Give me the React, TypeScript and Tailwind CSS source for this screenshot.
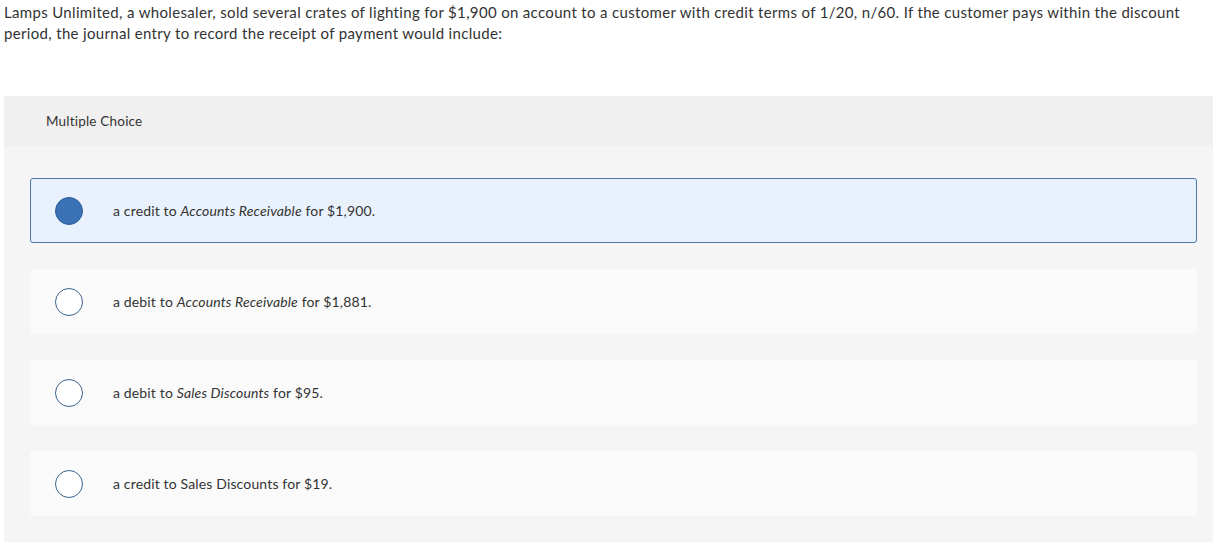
import React from 'react'

type Choice = {
  pre: string
  em?: string
  post: string
}

const choices: Choice[] = [
  { pre: 'a credit to ', em: 'Accounts Receivable', post: ' for $1,900.' },
  { pre: 'a debit to ', em: 'Accounts Receivable', post: ' for $1,881.' },
  { pre: 'a debit to ', em: 'Sales Discounts', post: ' for $95.' },
  { pre: 'a credit to Sales Discounts for $19.', post: '' },
]

function Radio({ checked }: { checked: boolean }) {
  return checked ? (
    <span className="block h-[28px] w-[28px] shrink-0 rounded-full border border-[#2c5d94] bg-[#3a72b5]" />
  ) : (
    <span className="block h-[28px] w-[28px] shrink-0 rounded-full border-[1.5px] border-[#3b628c] bg-white" />
  )
}

export default function App() {
  const selected = 0
  return (
    <div className="min-h-[542px] bg-white font-['Lato','Liberation_Sans',sans-serif] text-[#333]">
      <p className="px-[4px] pt-[2px] text-[15px] leading-[21px] tracking-[0.33px] text-[#333]">
        Lamps Unlimited, a wholesaler, sold several crates of lighting for $1,900 on account to a customer with credit
        terms of 1/20, n/60. If the customer pays within the discount
        <br />
        period, the journal entry to record the receipt of payment would include:
      </p>

      <div className="ml-[4px] mt-[52px] bg-[#f5f5f5] pb-[26px]">
        <div className="flex h-[50px] items-center bg-[#f0f0f0] pl-[42px] text-[13.5px] tracking-[0.2px] text-[#333]">
          Multiple Choice
        </div>
        <div className="flex flex-col gap-[26px] pl-[26px] pr-[16px] pt-[32px]">
          {choices.map((c, i) => {
            const isSel = i === selected
            return (
              <div
                key={i}
                className={`flex h-[65px] items-center rounded-[3px] pl-[24px] ${
                  isSel ? 'border border-[#4a78ad] bg-[#e9f2fc]' : 'border border-transparent bg-[#fafafa]'
                }`}
              >
                <Radio checked={isSel} />
                <span className="ml-[30px] text-[14px] tracking-[0.15px] text-[#333]">
                  {c.pre}
                  {c.em && <em className="italic">{c.em}</em>}
                  {c.post}
                </span>
              </div>
            )
          })}
        </div>
      </div>
    </div>
  )
}
